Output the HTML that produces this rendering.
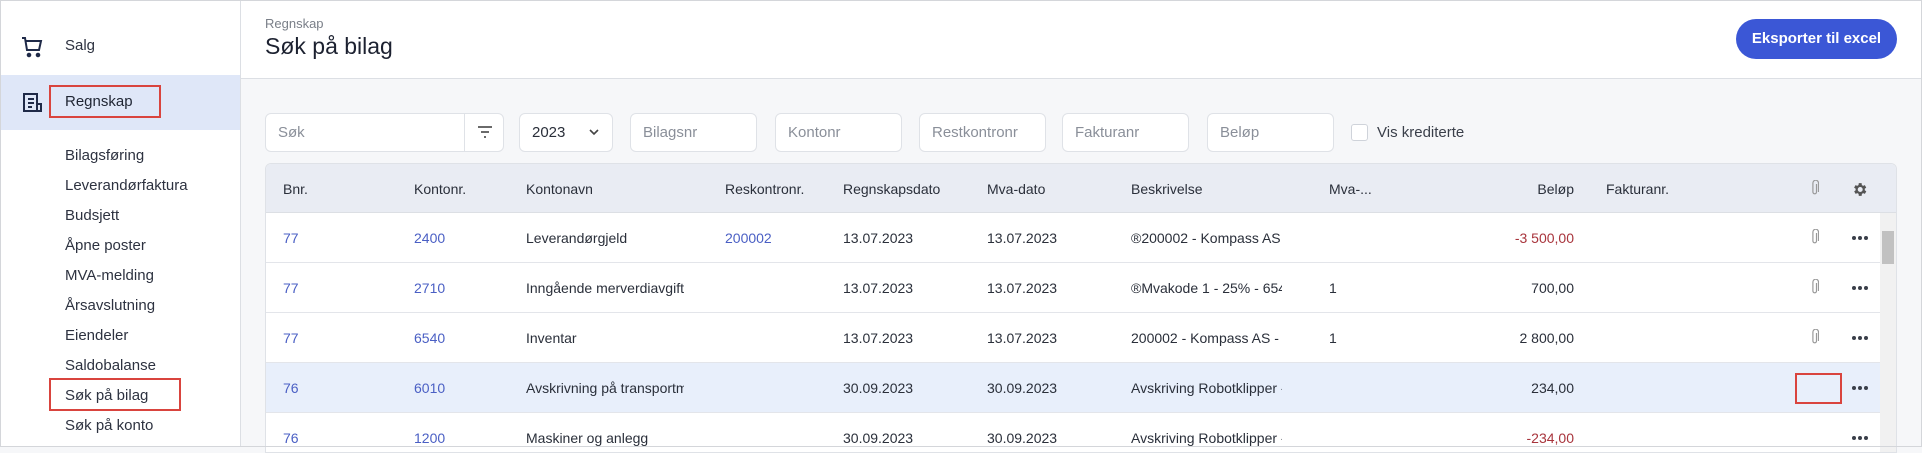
<!DOCTYPE html>
<html><head><meta charset="utf-8"><style>
*{box-sizing:border-box;margin:0;padding:0}
body{width:1922px;height:447px;overflow:hidden;font-family:"Liberation Sans",sans-serif;background:#f6f7f9;position:relative;color:#2a2f3a}
.a{position:absolute;white-space:nowrap}
#side{position:absolute;left:0;top:0;width:241px;height:447px;background:#fff;border-right:1px solid #dcdfe4}
#hdr{position:absolute;left:241px;top:0;right:0;height:79px;background:#fff;border-bottom:1px solid #dcdfe4}
.sub{position:absolute;left:65px;font-size:15px;color:#2d3240;line-height:20px}
.inp{position:absolute;top:113px;height:39px;background:#fff;border:1px solid #dfe2e7;border-radius:6px;font-size:15px;color:#8a8f99;line-height:37px;padding-left:12px}
#tbl{position:absolute;left:265px;top:163px;width:1632px;height:290px;background:#fff;border:1px solid #dfe2e7;border-radius:6px 6px 0 0;overflow:hidden}
.hd{position:absolute;left:0;top:0;width:100%;height:49px;background:#e9ecf3;border-bottom:1px solid #dcdfe4}
.row{position:absolute;left:0;width:1614px;height:50px;border-bottom:1px solid #e3e5ea}
.t{position:absolute;font-size:14px;line-height:18px;white-space:nowrap;overflow:hidden}
.l{color:#4a5fc4}.r{color:#a8343c}
.dots{position:absolute;left:1586px;width:16px;height:4px}
.dots i{position:absolute;top:0;width:4px;height:4px;border-radius:2px;background:#3a3f4a}
.clip{position:absolute;left:1545px}
#frame{position:absolute;left:0;top:0;width:1922px;height:447px;border:1px solid #d4d6da;pointer-events:none}
</style></head><body>
<div id="side">
 <svg class="a" style="left:21px;top:36px" width="22" height="22" viewBox="0 0 22 22" fill="none" stroke="#1f2a48" stroke-width="2"><path d="M1 2h3l2 12h12l2-9H5"/><circle cx="8" cy="19" r="1.3" fill="#1f2a48"/><circle cx="17" cy="19" r="1.3" fill="#1f2a48"/></svg>
 <div class="a" style="left:65px;top:37px;font-size:15px;color:#2d3240">Salg</div>
 <div class="a" style="left:0;top:75px;width:240px;height:55px;background:#dfe7f8"></div>
 <svg class="a" style="left:22px;top:92px" width="22" height="22" viewBox="0 0 22 22" fill="none" stroke="#1f2a48" stroke-width="2"><path d="M2 2h13v17H2z"/><path d="M15 12h4v7h-4M6 7h6M6 11h6M6 15h4"/></svg>
 <div class="a" style="left:49px;top:85px;width:112px;height:33px;border:2px solid #d9443e"></div>
 <div class="a" style="left:65px;top:93px;font-size:15px;color:#1f2533">Regnskap</div>
 <div class="sub" style="top:146px">Bilagsføring</div>
 <div class="sub" style="top:176px">Leverandørfaktura</div>
 <div class="sub" style="top:206px">Budsjett</div>
 <div class="sub" style="top:236px">Åpne poster</div>
 <div class="sub" style="top:266px">MVA-melding</div>
 <div class="sub" style="top:296px">Årsavslutning</div>
 <div class="sub" style="top:326px">Eiendeler</div>
 <div class="sub" style="top:356px">Saldobalanse</div>
 <div class="a" style="left:49px;top:378px;width:132px;height:33px;border:2px solid #d9443e"></div>
 <div class="sub" style="top:386px">Søk på bilag</div>
 <div class="sub" style="top:416px">Søk på konto</div>
</div>
<div id="hdr">
 <div class="a" style="left:24px;top:16px;font-size:13px;color:#7a7f88">Regnskap</div>
 <div class="a" style="left:24px;top:33px;font-size:23px;color:#1c2130">Søk på bilag</div>
 <div class="a" style="left:1495px;top:19px;width:161px;height:40px;border-radius:20px;background:#3b57d6;color:#fff;font-weight:bold;font-size:15px;line-height:40px;text-align:center">Eksporter til excel</div>
</div>
<div class="inp" style="left:265px;width:239px">Søk</div>
<div class="a" style="left:464px;top:114px;width:1px;height:37px;background:#dfe2e7"></div>
<svg class="a" style="left:477px;top:125px" width="16" height="14" viewBox="0 0 16 14" stroke="#555" stroke-width="1.8"><path d="M1 2h14M4 7h8M7 12h2"/></svg>
<div class="inp" style="left:519px;width:94px;color:#2a2f3a">2023</div>
<svg class="a" style="left:589px;top:128px" width="10" height="8" viewBox="0 0 10 8" fill="none" stroke="#444" stroke-width="1.6"><path d="M1 2l4 4 4-4"/></svg>
<div class="inp" style="left:630px;width:127px">Bilagsnr</div>
<div class="inp" style="left:775px;width:127px">Kontonr</div>
<div class="inp" style="left:919px;width:127px">Restkontronr</div>
<div class="inp" style="left:1062px;width:127px">Fakturanr</div>
<div class="inp" style="left:1207px;width:127px">Beløp</div>
<div class="a" style="left:1351px;top:124px;width:17px;height:17px;border:1px solid #cfd3da;border-radius:3px;background:#fff"></div>
<div class="a" style="left:1377px;top:124px;font-size:15px;color:#3a3f4a">Vis krediterte</div>
<div id="tbl">
 <div class="hd"></div>
 <div class="t" style="left:17px;top:16px">Bnr.</div>
 <div class="t" style="left:148px;top:16px">Kontonr.</div>
 <div class="t" style="left:260px;top:16px">Kontonavn</div>
 <div class="t" style="left:459px;top:16px">Reskontronr.</div>
 <div class="t" style="left:577px;top:16px">Regnskapsdato</div>
 <div class="t" style="left:721px;top:16px">Mva-dato</div>
 <div class="t" style="left:865px;top:16px">Beskrivelse</div>
 <div class="t" style="left:1063px;top:16px">Mva-...</div>
 <div class="t" style="left:1200px;top:16px;width:108px;text-align:right">Beløp</div>
 <div class="t" style="left:1340px;top:16px">Fakturanr.</div>
 <svg class="clip" style="top:16px" width="8" height="16" viewBox="0 0 8 16" fill="none" stroke="#999" stroke-width="1.2"><path d="M5.5 4v8a1.8 1.8 0 0 1-3.6 0V3a2.8 2.8 0 0 1 5.6 0v9"/></svg>
 <svg class="a" style="left:1585px;top:17px" width="17" height="17" viewBox="0 0 24 24"><path fill="#555" d="M19.4 13a7.5 7.5 0 0 0 0-2l2.1-1.6-2-3.5-2.5 1a7 7 0 0 0-1.7-1L15 3h-4l-.4 2.9a7 7 0 0 0-1.7 1l-2.5-1-2 3.5L6.6 11a7.5 7.5 0 0 0 0 2l-2.1 1.6 2 3.5 2.5-1a7 7 0 0 0 1.7 1L11 21h4l.4-2.9a7 7 0 0 0 1.7-1l2.5 1 2-3.5zM13 15.5a3.5 3.5 0 1 1 0-7 3.5 3.5 0 0 1 0 7z"/></svg>

 <div class="row" style="top:49px"></div>
 <div class="row" style="top:99px"></div>
 <div class="row" style="top:149px"></div>
 <div class="row" style="top:199px;background:#e8effb"></div>
 <div class="row" style="top:249px"></div>

 <div class="t l" style="left:17px;top:65px">77</div><div class="t l" style="left:148px;top:65px">2400</div><div class="t" style="left:260px;top:65px;width:158px">Leverandørgjeld</div><div class="t l" style="left:459px;top:65px">200002</div><div class="t" style="left:577px;top:65px">13.07.2023</div><div class="t" style="left:721px;top:65px">13.07.2023</div><div class="t" style="left:865px;top:65px;width:151px">®200002 - Kompass AS - </div><div class="t r" style="left:1200px;top:65px;width:108px;text-align:right">-3 500,00</div>
 <div class="t l" style="left:17px;top:115px">77</div><div class="t l" style="left:148px;top:115px">2710</div><div class="t" style="left:260px;top:115px;width:158px">Inngående merverdiavgift</div><div class="t" style="left:577px;top:115px">13.07.2023</div><div class="t" style="left:721px;top:115px">13.07.2023</div><div class="t" style="left:865px;top:115px;width:151px">®Mvakode 1 - 25% - 6540</div><div class="t" style="left:1063px;top:115px">1</div><div class="t" style="left:1200px;top:115px;width:108px;text-align:right">700,00</div>
 <div class="t l" style="left:17px;top:165px">77</div><div class="t l" style="left:148px;top:165px">6540</div><div class="t" style="left:260px;top:165px;width:158px">Inventar</div><div class="t" style="left:577px;top:165px">13.07.2023</div><div class="t" style="left:721px;top:165px">13.07.2023</div><div class="t" style="left:865px;top:165px;width:151px">200002 - Kompass AS - f</div><div class="t" style="left:1063px;top:165px">1</div><div class="t" style="left:1200px;top:165px;width:108px;text-align:right">2 800,00</div>
 <div class="t l" style="left:17px;top:215px">76</div><div class="t l" style="left:148px;top:215px">6010</div><div class="t" style="left:260px;top:215px;width:158px">Avskrivning på transportmidler</div><div class="t" style="left:577px;top:215px">30.09.2023</div><div class="t" style="left:721px;top:215px">30.09.2023</div><div class="t" style="left:865px;top:215px;width:151px">Avskriving Robotklipper - </div><div class="t" style="left:1200px;top:215px;width:108px;text-align:right">234,00</div>
 <div class="t l" style="left:17px;top:265px">76</div><div class="t l" style="left:148px;top:265px">1200</div><div class="t" style="left:260px;top:265px;width:158px">Maskiner og anlegg</div><div class="t" style="left:577px;top:265px">30.09.2023</div><div class="t" style="left:721px;top:265px">30.09.2023</div><div class="t" style="left:865px;top:265px;width:151px">Avskriving Robotklipper - </div><div class="t r" style="left:1200px;top:265px;width:108px;text-align:right">-234,00</div>

 <svg class="clip" style="top:65px" width="8" height="16" viewBox="0 0 8 16" fill="none" stroke="#999" stroke-width="1.2"><path d="M5.5 4v8a1.8 1.8 0 0 1-3.6 0V3a2.8 2.8 0 0 1 5.6 0v9"/></svg>
 <svg class="clip" style="top:115px" width="8" height="16" viewBox="0 0 8 16" fill="none" stroke="#999" stroke-width="1.2"><path d="M5.5 4v8a1.8 1.8 0 0 1-3.6 0V3a2.8 2.8 0 0 1 5.6 0v9"/></svg>
 <svg class="clip" style="top:165px" width="8" height="16" viewBox="0 0 8 16" fill="none" stroke="#999" stroke-width="1.2"><path d="M5.5 4v8a1.8 1.8 0 0 1-3.6 0V3a2.8 2.8 0 0 1 5.6 0v9"/></svg>
 <div class="a" style="left:1529px;top:209px;width:47px;height:31px;border:2px solid #d9443e"></div>
 <div class="dots" style="top:72px"><i style="left:0"></i><i style="left:6px"></i><i style="left:12px"></i></div>
 <div class="dots" style="top:122px"><i style="left:0"></i><i style="left:6px"></i><i style="left:12px"></i></div>
 <div class="dots" style="top:172px"><i style="left:0"></i><i style="left:6px"></i><i style="left:12px"></i></div>
 <div class="dots" style="top:222px"><i style="left:0"></i><i style="left:6px"></i><i style="left:12px"></i></div>
 <div class="dots" style="top:272px"><i style="left:0"></i><i style="left:6px"></i><i style="left:12px"></i></div>
 <div class="a" style="left:1614px;top:49px;width:17px;height:240px;background:#f1f1f1"></div>
 <div class="a" style="left:1616px;top:67px;width:12px;height:33px;background:#c1c1c1"></div>
</div>
<div id="frame"></div>
</body></html>
